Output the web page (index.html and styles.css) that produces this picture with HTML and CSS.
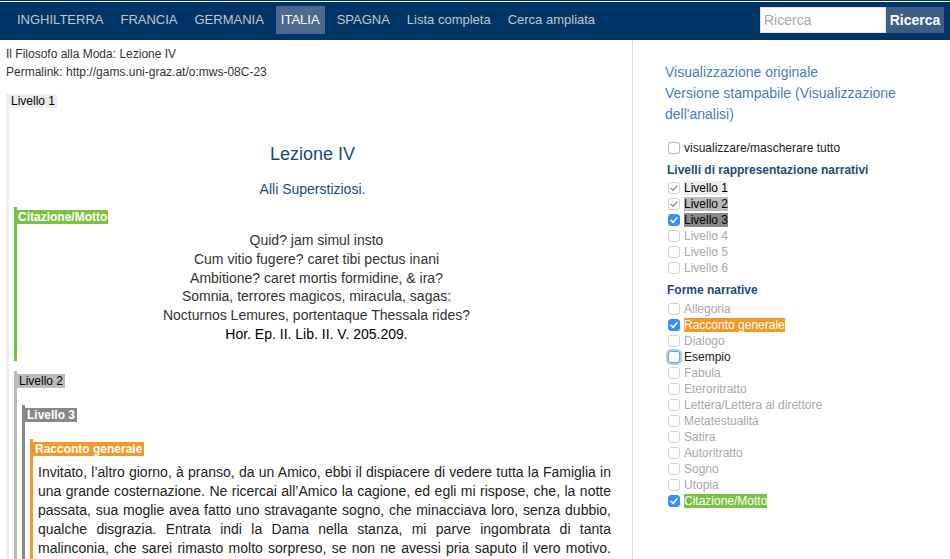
FILE: index.html
```html
<!DOCTYPE html>
<html lang="it">
<head>
<meta charset="utf-8">
<title>Il Filosofo alla Moda: Lezione IV</title>
<link rel="stylesheet" href="styles.css">
</head>
<body>
<header class="nav">
  <div class="bar">
    <ul class="menu">
      <li><a href="#">INGHILTERRA</a></li>
      <li><a href="#">FRANCIA</a></li>
      <li><a href="#">GERMANIA</a></li>
      <li><a href="#" class="active">ITALIA</a></li>
      <li><a href="#">SPAGNA</a></li>
      <li><a href="#">Lista completa</a></li>
      <li><a href="#">Cerca ampliata</a></li>
    </ul>
    <form class="search">
      <input type="text" placeholder="Ricerca">
      <button type="button">Ricerca</button>
    </form>
  </div>
</header>
<div class="page">
  <main class="content">
    <div class="meta">
      <div>Il Filosofo alla Moda: Lezione IV</div>
      <div>Permalink: http://gams.uni-graz.at/o:mws-08C-23</div>
    </div>
    <section class="lvl lvl1">
      <div class="tag tag-l1">Livello 1</div>
      <h2 class="title">Lezione IV</h2>
      <p class="subtitle">Alli Superstiziosi.</p>
      <section class="lvl cit">
        <div class="tag tag-cit">Citazione/Motto</div>
        <div class="poem">
          <div>Quid? jam simul insto</div>
          <div>Cum vitio fugere? caret tibi pectus inani</div>
          <div>Ambitione? caret mortis formidine, &amp; ira?</div>
          <div>Somnia, terrores magicos, miracula, sagas:</div>
          <div>Nocturnos Lemures, portentaque Thessala rides?</div>
          <div class="ref">Hor. Ep. II. Lib. II. V. 205.209.</div>
        </div>
      </section>
      <section class="lvl lvl2">
        <div class="tag tag-l2">Livello 2</div>
        <section class="lvl lvl3">
          <div class="tag tag-l3">Livello 3</div>
          <section class="lvl rac">
            <div class="tag tag-rac">Racconto generale</div>
            <p class="text">
              <span>Invitato, l’altro giorno, à pranso, da un Amico, ebbi il dispiacere di vedere tutta la Famiglia in</span>
              <span>una grande costernazione. Ne ricercai all’Amico la cagione, ed egli mi rispose, che, la notte</span>
              <span>passata, sua moglie avea fatto uno stravagante sogno, che minacciava loro, senza dubbio,</span>
              <span>qualche disgrazia. Entrata indi la Dama nella stanza, mi parve ingombrata di tanta</span>
              <span>malinconia, che sarei rimasto molto sorpreso, se non ne avessi pria saputo il vero motivo.</span>
            </p>
          </section>
        </section>
      </section>
    </section>
  </main>
  <aside class="side">
    <div class="links">
      <a href="#">Visualizzazione originale</a>
      <a href="#">Versione stampabile (Visualizzazione dell'analisi)</a>
    </div>
    <div class="opts">
      <div class="row"><span class="cb"></span><span>visualizzare/mascherare tutto</span></div>
      <div class="head">Livelli di rappresentazione narrativi</div>
      <div class="row"><span class="cb dis"><svg viewBox="0 0 12 12"><path d="M3 6.3 5.1 8.4 9 3.8"/></svg></span><span class="hl-l1">Livello 1</span></div>
      <div class="row"><span class="cb dis"><svg viewBox="0 0 12 12"><path d="M3 6.3 5.1 8.4 9 3.8"/></svg></span><span class="hl-l2">Livello 2</span></div>
      <div class="row"><span class="cb on"><svg viewBox="0 0 12 12"><path d="M3 6.3 5.1 8.4 9 3.8"/></svg></span><span class="hl-l3">Livello 3</span></div>
      <div class="row off"><span class="cb dis"></span><span>Livello 4</span></div>
      <div class="row off"><span class="cb dis"></span><span>Livello 5</span></div>
      <div class="row off"><span class="cb dis"></span><span>Livello 6</span></div>
      <div class="head head2">Forme narrative</div>
      <div class="row off"><span class="cb dis"></span><span>Allegoria</span></div>
      <div class="row"><span class="cb on"><svg viewBox="0 0 12 12"><path d="M3 6.3 5.1 8.4 9 3.8"/></svg></span><span class="hl-rac">Racconto generale</span></div>
      <div class="row off"><span class="cb dis"></span><span>Dialogo</span></div>
      <div class="row"><span class="cb focus"></span><span>Esempio</span></div>
      <div class="row off"><span class="cb dis"></span><span>Fabula</span></div>
      <div class="row off"><span class="cb dis"></span><span>Eteroritratto</span></div>
      <div class="row off"><span class="cb dis"></span><span>Lettera/Lettera al direttore</span></div>
      <div class="row off"><span class="cb dis"></span><span>Metatestualità</span></div>
      <div class="row off"><span class="cb dis"></span><span>Satira</span></div>
      <div class="row off"><span class="cb dis"></span><span>Autoritratto</span></div>
      <div class="row off"><span class="cb dis"></span><span>Sogno</span></div>
      <div class="row off"><span class="cb dis"></span><span>Utopia</span></div>
      <div class="row"><span class="cb on"><svg viewBox="0 0 12 12"><path d="M3 6.3 5.1 8.4 9 3.8"/></svg></span><span class="hl-cit">Citazione/Motto</span></div>
    </div>
  </aside>
</div>
</body>
</html>
```
FILE: styles.css
```css
* { box-sizing: border-box; }
html, body { margin: 0; padding: 0; }
body {
  font-family: "Liberation Sans", Arial, sans-serif;
  color: #333;
  background: #fff;
  overflow: hidden;
  height: 559px;
}

/* ---------- navigation ---------- */
.nav {
  border-top: 1px solid #003366;
  background: #fff;
}
.bar {
  margin-top: 1px;
  height: 38px;
  background: #003366;
  display: flex;
  justify-content: space-between;
  align-items: flex-start;
  padding: 0 6px 0 12px;
}
.menu {
  list-style: none;
  margin: 0;
  padding: 0;
  display: flex;
  gap: 7px;
}
.menu a {
  display: block;
  margin-top: 4px;
  height: 28px;
  line-height: 27px;
  padding: 0 5px;
  font-size: 13px;
  color: #c0c6ce;
  text-decoration: none;
}
.menu a.active {
  background: #4c6a8e;
  color: #fff;
}
.search {
  display: flex;
  margin-top: 5px;
}
.search input {
  width: 126px;
  height: 26px;
  border: 1px solid #e2e2e2;
  padding: 0 3px;
  font-family: inherit;
  font-size: 14px;
  color: #333;
  outline: none;
  margin: 0;
}
.search input::placeholder { color: #a8a8a8; }
.search button {
  width: 58px;
  height: 26px;
  border: 0;
  margin: 0;
  padding: 0;
  background: #3d5e87;
  color: #fff;
  font-family: inherit;
  font-weight: bold;
  font-size: 14px;
}

/* ---------- page ---------- */
.page {
  display: flex;
  height: 519px;
}
.content {
  width: 632px;
  flex: none;
  padding: 5px 16px 0 6px;
}
.meta {
  font-size: 12px;
  line-height: 18px;
  color: #333;
}

.lvl {
  border-left: 3px solid #eee;
}
.lvl1 {
  margin-top: 13px;
  padding-bottom: 40px;
}
.tag {
  width: fit-content;
  height: 14px;
  line-height: 14px;
  font-size: 12px;
  padding: 0 2px;
}
.tag-l1 { background: #eee; color: #000; }
.tag-cit { background: #7cc242; color: #fff; font-weight: bold; padding: 0 1px; }
.tag-l2 { background: #bbb; color: #000; }
.tag-l3 { background: #888; color: #fff; font-weight: bold; }
.tag-rac { background: #f5982a; color: #fff; font-weight: bold; }

.title {
  margin: 35px 0 0;
  font-size: 18px;
  line-height: 22px;
  font-weight: normal;
  text-align: center;
  color: #174c7c;
}
.subtitle {
  margin: 15px 0 0;
  font-size: 14px;
  line-height: 18px;
  text-align: center;
  color: #174c7c;
}

.cit {
  margin: 9px 0 0 5px;
  padding-top: 3px;
  padding-bottom: 17px;
  border-left-color: #7cc242;
}
.poem {
  margin-top: 7px;
  font-size: 14px;
  line-height: 18.8px;
  text-align: center;
  color: #333;
}
.poem .ref { color: #000; }

.lvl2 {
  margin: 10px 0 0 5px;
  padding-top: 3px;
  border-left-color: #bbb;
  padding-bottom: 40px;
}
.lvl3 {
  margin: 17px 0 0 5px;
  padding-top: 3px;
  border-left-color: #888;
  padding-bottom: 40px;
}
.rac {
  margin: 17px 0 0 5px;
  padding-top: 3px;
  border-left-color: #f5982a;
  padding-bottom: 40px;
}
.text {
  margin: 7px 5px 0 5px;
  font-size: 14px;
  line-height: 19px;
  color: #222;
}
.text span {
  display: block;
  text-align: justify;
  text-align-last: justify;
}

/* ---------- sidebar ---------- */
.side {
  flex: 1;
  border-left: 1px solid #ddd;
  padding: 22px 15px 0 32px;
}
.links a {
  display: block;
  font-size: 14px;
  line-height: 21px;
  color: #4b7bbf;
  text-decoration: none;
}
.opts {
  margin-top: 15px;
  font-size: 12px;
}
.row {
  display: flex;
  align-items: center;
  height: 16px;
  color: #222;
}
.row.off { color: #a9a9a9; }
.head {
  margin: 6px 0 2px 2px;
  line-height: 16px;
  font-weight: bold;
  color: #1d4b76;
}
.head2 { margin-bottom: 3px; }
.cb {
  flex: none;
  width: 12px;
  height: 12px;
  margin: 0 4px 0 3px;
  border: 1px solid #b3b3b3;
  border-radius: 3px;
  background: #fff;
  display: flex;
  align-items: center;
  justify-content: center;
}
.cb svg {
  width: 12px;
  height: 12px;
  flex: none;
}
.cb svg path {
  fill: none;
  stroke: #fff;
  stroke-width: 1.5;
  stroke-linecap: round;
  stroke-linejoin: round;
}
.cb.dis { border-color: #d2d2d2; }
.cb.dis svg path { stroke: #a0a0a0; }
.cb.on {
  background: #3b8ef5;
  border-color: #3b8ef5;
}
.cb.focus {
  border-color: #6a9fdc;
  box-shadow: 0 0 0 2px rgba(112, 164, 230, 0.55);
}
.hl-l1 { background: #eee; color: #000; }
.hl-l2 { background: #bbb; color: #000; }
.hl-l3 { background: #888; color: #000; }
.hl-rac { background: #f5982a; color: #fff; }
.hl-cit { background: #7cc242; color: #fff; }
```
